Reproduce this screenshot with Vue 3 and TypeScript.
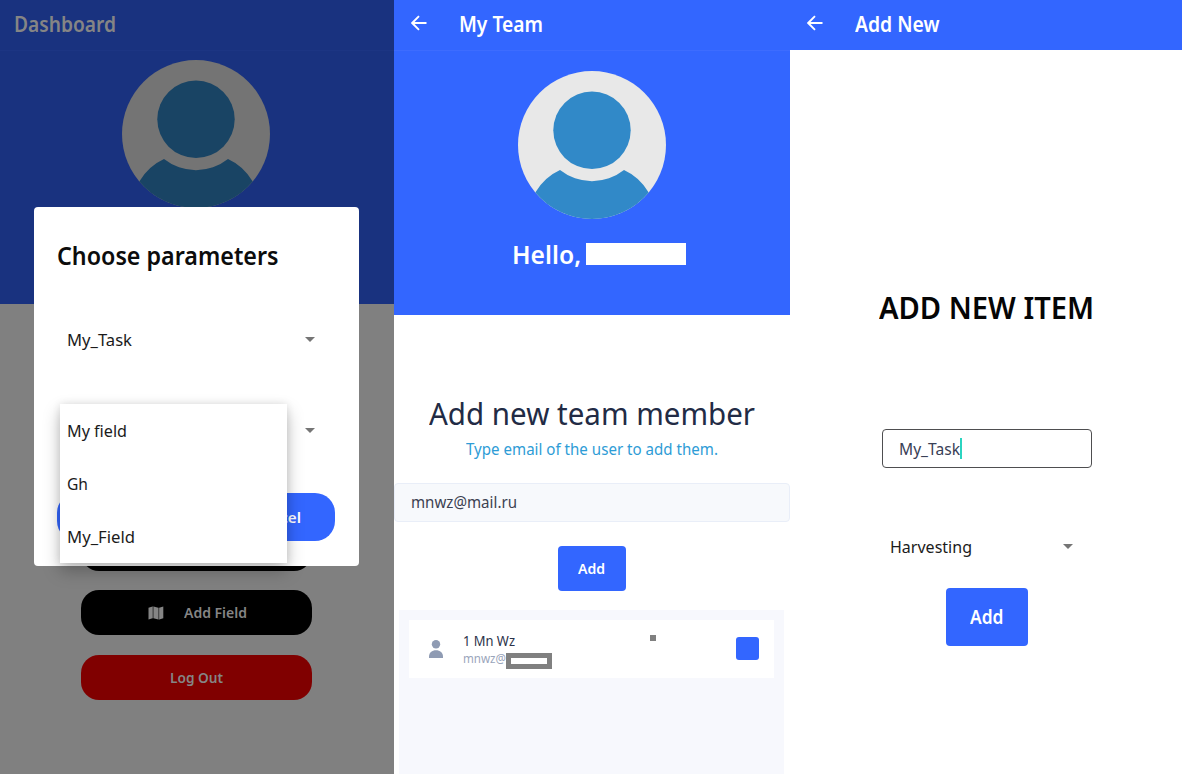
<script setup lang="ts">
import { ref } from 'vue'

/** Condenses or widens a line of text so that it takes up the given width. */
const vFit = {
  mounted(el: HTMLElement, binding: { value: number }) {
    const natural = el.getBoundingClientRect().width
    el.style.transform = `scaleX(${binding.value / natural})`
    el.style.marginRight = `${binding.value - natural}px`
  },
}

const fieldOptions = [
  { label: 'My field', width: 60 },
  { label: 'Gh', width: 21 },
  { label: 'My_Field', width: 68 },
]
const member = ref({ name: '1 Mn Wz', mail: 'mnwz@' })
</script>

<template>
  <main class="board">
    <section class="screen dashboard">
      <div class="dim-hero">
        <header class="bar"><span v-fit="102" class="bar-title">Dashboard</span></header>
        <svg class="avatar" viewBox="0 0 148 148">
          <circle class="disc" cx="74" cy="74" r="74" />
          <circle class="figure" cx="74" cy="59.300" r="38.700" />
          <path class="figure" d="M17.300 121.500Q26.500 106 42 99A51.500 51.500 0 0 0 106 99Q121.500 106 130.700 121.500A74 74 0 0 1 17.300 121.500Z" />
        </svg>
      </div>
      <div class="actions">
        <button class="action"></button>
        <button class="action">
          <svg class="map" viewBox="0 0 16 14">
            <path class="fold" d="M4.300.5H5.500V12.200H4.300ZM10.300 1.800H11.500V13.500H10.300Z" />
            <path d="M.5 1.800 4.600.5V12.200L.5 13.500ZM5.500.5 10.300 1.800V13.500L5.500 12.200ZM11.200 1.800 15.300.5V12.200L11.200 13.500Z" />
          </svg>
          <span v-fit="63">Add Field</span>
        </button>
        <button class="action logout"><span v-fit="53">Log Out</span></button>
      </div>

      <div class="dialog">
        <h2><span v-fit="221.500">Choose parameters</span></h2>
        <div class="select"><span v-fit="65">My_Task</span><i class="caret"></i></div>
        <div class="select second"><span v-fit="61">My field</span><i class="caret"></i></div>
        <div class="dialog-buttons">
          <button></button>
          <button><span v-fit="49">Cancel</span></button>
        </div>
        <ul class="menu">
          <li v-for="o in fieldOptions" :key="o.label"><span v-fit="o.width">{{ o.label }}</span></li>
        </ul>
      </div>
    </section>

    <section class="screen team">
      <div class="hero">
        <header class="bar">
          <svg class="back" viewBox="0 0 16 16"><path d="M15.500 8H1.500M8 1.200 1.200 8 8 14.800" /></svg>
          <span v-fit="84" class="bar-title">My Team</span>
        </header>
        <svg class="avatar" viewBox="0 0 148 148">
          <circle class="disc" cx="74" cy="74" r="74" />
          <circle class="figure" cx="74" cy="59.300" r="38.700" />
          <path class="figure" d="M17.300 121.500Q26.500 106 42 99A51.500 51.500 0 0 0 106 99Q121.500 106 130.700 121.500A74 74 0 0 1 17.300 121.500Z" />
        </svg>
        <div class="hello"><span v-fit="69">Hello,</span><i class="blank"></i></div>
      </div>
      <h1><span v-fit="326">Add new team member</span></h1>
      <p class="hint"><span v-fit="252">Type email of the user to add them.</span></p>
      <div class="mail"><span v-fit="106">mnwz@mail.ru</span></div>
      <button class="add"><span v-fit="27">Add</span></button>
      <div class="list">
        <div class="member">
          <svg class="person" viewBox="0 0 14 18">
            <circle cx="7" cy="4.200" r="4.200" />
            <path d="M0 18V16.500C0 12.500 3 10.200 7 10.200S14 12.500 14 16.500V18Z" />
          </svg>
          <div class="who">
            <span v-fit="52" class="name">{{ member.name }}</span>
            <span v-fit="43" class="address">{{ member.mail }}</span>
          </div>
          <i class="square"></i>
          <i class="mask"></i>
          <i class="dot"></i>
        </div>
      </div>
    </section>

    <section class="screen item">
      <header class="bar">
        <svg class="back" viewBox="0 0 16 16"><path d="M15.500 8H1.500M8 1.200 1.200 8 8 14.800" /></svg>
        <span v-fit="84.500" class="bar-title">Add New</span>
      </header>
      <h1><span v-fit="215">ADD NEW ITEM</span></h1>
      <div class="name-field"><span v-fit="61">My_Task</span><i class="cursor"></i></div>
      <div class="kind"><span v-fit="82">Harvesting</span><i class="caret"></i></div>
      <button class="add"><span v-fit="33.500">Add</span></button>
    </section>
  </main>
</template>

<style>
body { margin: 0; overflow: hidden; }
</style>

<style scoped>
* { box-sizing: border-box; margin: 0; padding: 0; }
span { display: inline-block; white-space: nowrap; transform-origin: left center; }
i { display: block; flex: none; }
svg { display: block; flex: none; }
button { border: 0; font: inherit; color: inherit; display: flex; align-items: center; justify-content: center; }
.board { width: 1182px; height: 774px; display: grid; grid-template-columns: 394px 395.500px 1fr; font-family: "Noto Sans", sans-serif; font-size: 17px; background: #fff; }
.screen { position: relative; height: 774px; overflow: hidden; display: flex; flex-direction: column; }
.bar { height: 50px; flex: none; display: flex; align-items: center; background: #3366ff; color: #fff; padding: 0 0 3px 17px; }
.bar-title { font-size: 21px; font-weight: 600; line-height: 30px; }
.back { width: 16px; height: 16px; margin: -1px 32px 0 0; fill: none; stroke: #fff; stroke-width: 1.900; }
.avatar { width: 148px; height: 148px; }
.disc { fill: #e8e8e8; }
.figure { fill: #3189c8; }
.caret { border: 5px solid transparent; border-top: 5px solid #757575; border-bottom: 0; }

.dashboard { background: #808080; }
.dim-hero { height: 304px; background: #19327f; display: flex; flex-direction: column; align-items: center; flex: none; }
.dim-hero .bar { height: 51px; align-self: stretch; background: #19327f; color: #858585; padding: 0 0 2px 13.500px; border-bottom: 1px solid #1c3583; }
.dim-hero .avatar { margin: 9px 0 0 -2px; }
.dim-hero .disc { fill: #747474; }
.dim-hero .figure { fill: #194464; }
.actions { display: flex; flex-direction: column; gap: 19.500px; padding: 221.500px 0 0 81px; }
.action { width: 230.500px; height: 45px; border-radius: 18px; background: #000; color: #858585; font-size: 15px; font-weight: 600; padding-bottom: 1px; }
.logout { background: #800000; }
.action:nth-child(2) { padding-left: 3px; }
.map { width: 16px; height: 14px; margin: 1px 20px 0 -1px; fill: #858585; }
.fold { fill: #4a4a4a; }

.dialog { position: absolute; left: 33.500px; top: 207px; width: 325.500px; height: 359px; padding: 32px 24px 0 23.500px; background: #fff; border-radius: 4px; display: flex; flex-direction: column; }
.dialog h2 { font-size: 24.500px; line-height: 34px; font-weight: 600; color: #0c0c0c; }
.select { display: flex; align-items: center; justify-content: space-between; height: 30px; margin-top: 51px; padding: 0 20px 0 9.500px; color: #1b1b1b; }
.select.second { margin-top: 61px; }
.dialog-buttons { display: flex; justify-content: space-between; margin: 48px 0 0 0; }
.dialog-buttons button { width: 117px; height: 48px; border-radius: 20px; background: #3366ff; color: #fff; font-size: 15px; font-weight: 600; padding-bottom: 1px; }
.menu { position: absolute; left: 26px; top: 197px; width: 227.500px; height: 159px; list-style: none; background: #fff; color: #1b1b1b; box-shadow: 0 8px 16px rgba(0,0,0,.26), 0 0 8px rgba(0,0,0,.1); }
.menu li { height: 53px; display: flex; align-items: center; padding-left: 7px; }

.team .hero { height: 314.500px; flex: none; background: #3366ff; display: flex; flex-direction: column; align-items: center; }
.team .bar { height: 51px; padding-bottom: 3px; align-self: stretch; border-bottom: 1px solid #3d6cff; }
.team .avatar { margin: 20px 0 0 0; }
.hello { display: flex; align-items: center; margin: 17px 0 0 15px; color: #fff; font-size: 25px; font-weight: 600; line-height: 36px; }
.blank { width: 100px; height: 22px; margin-left: 5px; background: #fff; }
.team h1 { margin-top: 76.500px; text-align: center; font-size: 31.500px; line-height: 44px; font-weight: 400; color: #222b45; }
.hint { text-align: center; color: #2e9cd6; font-size: 16px; line-height: 28px; }
.mail { height: 38.500px; margin-top: 20px; flex: none; border: 1px solid #e9eef8; border-radius: 4px; background: #f7f9fc; padding: 0 0 1px 15.500px; display: flex; align-items: center; color: #3c4252; }
.team .add { width: 68px; height: 45px; margin: 24px 0 0 163.500px; border-radius: 4px; background: #3366ff; color: #fff; font-size: 15px; font-weight: 600; flex: none; }
.list { flex: 1; margin: 19.500px 5.500px 0 5px; padding: 9.500px 10px; background: #f7f8fd; }
.member { position: relative; height: 58.500px; padding: 0 15px 0 20px; background: #fff; display: flex; align-items: center; }
.person { width: 14px; height: 18px; fill: #8f9bb3; }
.who { margin-left: 20px; display: flex; flex-direction: column; align-items: flex-start; }
.name { font-size: 14px; line-height: 19px; color: #2b3249; }
.address { font-size: 12.500px; line-height: 17px; color: #9aa5bb; }
.square { width: 23px; height: 23px; margin-left: auto; border-radius: 3px; background: #3366ff; }
.mask { position: absolute; left: 97px; top: 33px; width: 46px; height: 16px; border: 5px solid #808080; background: #fff; }
.dot { position: absolute; left: 241px; top: 15px; width: 6px; height: 6px; background: #808080; }

.item { align-items: center; padding-left: 2px; }
.item .bar { align-self: stretch; margin-left: -2px; padding-bottom: 3px; }
.item h1 { margin-top: 235px; font-size: 31px; line-height: 44px; font-weight: 600; color: #050505; }
.name-field { width: 209.500px; height: 38.500px; margin-top: 100px; flex: none; border: 1.300px solid #4e4e50; border-radius: 4px; padding-left: 15.500px; display: flex; align-items: center; color: #394056; }
.cursor { width: 2px; height: 21px; background: #2bd4c0; }
.kind { width: 209px; height: 30px; margin-top: 63.500px; display: flex; align-items: center; justify-content: space-between; padding: 0 18.500px 0 8px; color: #1b1b1b; }
.item .add { width: 82px; height: 58px; margin-top: 27px; border-radius: 4px; background: #3366ff; color: #fff; font-size: 19px; font-weight: 600; }
</style>
